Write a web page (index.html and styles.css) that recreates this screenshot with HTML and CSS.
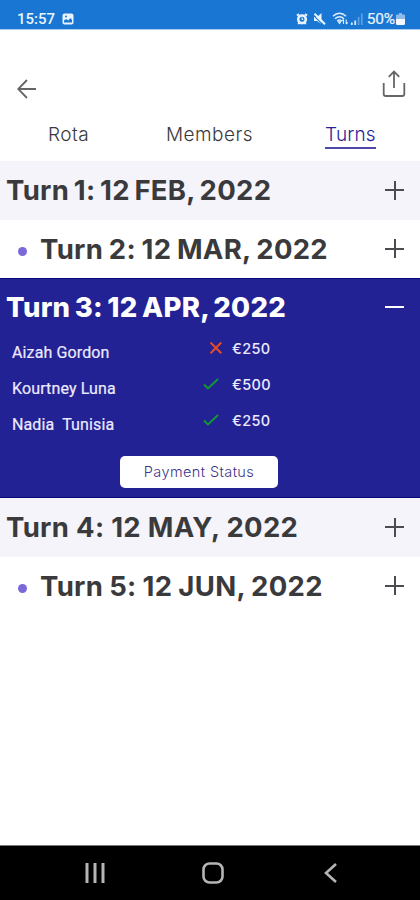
FILE: index.html
```html
<!DOCTYPE html>
<html lang="en">
<head>
    <meta charset="UTF-8">
    <meta name="viewport" content="width=device-width, initial-scale=1.0">
    <title>Turns</title>
    <link rel="stylesheet" href="styles.css">
</head>
<body>
    <div class="status-bar">
        <span class="clock">15:57</span>
        <svg class="photo-icon" width="12" height="12" viewBox="0 0 12 12">
            <rect x="0.5" y="0.5" width="11" height="11" rx="2" fill="#e9f3fc"/>
            <path d="M2 9.5V7.5L4.2 6l2 1.6L8.5 5 10 7v2.5z" fill="#1976d2"/>
            <circle cx="4" cy="3.6" r="1" fill="#1976d2"/>
        </svg>
        <div class="status-right">
            <svg class="alarm-icon" width="12" height="12" viewBox="0 0 12 12">
                <circle cx="6" cy="6.3" r="3.8" fill="none" stroke="#e9f3fc" stroke-width="2.6"/>
                <path d="M1 2.6L3 1M11 2.6L9 1M2.2 11l1.4-1.6M9.8 11L8.4 9.4" stroke="#e9f3fc" stroke-width="2"/>
                <path d="M6 4.5v2h1.3" fill="none" stroke="#e9f3fc"/>
            </svg>
            <svg class="mute-icon" width="13" height="12" viewBox="0 0 13 12">
                <path d="M1 4h3l4.5-4v11L4 8H1z" fill="#e9f3fc"/>
                <path d="M0.5 2.3l9.5 9.5" stroke="#1976d2" stroke-width="1.2"/>
                <path d="M1.5 0.8l10.5 10.5" stroke="#e9f3fc" stroke-width="2"/>
            </svg>
            <svg class="wifi-icon" width="17" height="13" viewBox="0 0 17 13">
                <path d="M1 4.3c4-4 9-4 13 0M3 6.8c3-2.7 6-2.7 9 0M5.2 9c1.6-1.4 3-1.4 4.6 0" fill="none" stroke="#e0eefb" stroke-width="1.5"/>
                <path d="M7.5 11.5L6.3 9.8h2.4zM11.5 12V7.5M10 9l1.5-1.7M14.2 7.5V12M15.8 10.3L14.2 12" fill="#e0eefb" stroke="#e0eefb" stroke-width="1.1"/>
            </svg>
            <svg class="signal-icon" width="13" height="12" viewBox="0 0 13 12">
                <path d="M1.8 12V9.5M5.2 12V7.5" stroke="#d5e7f9" stroke-width="1.8"/>
                <path d="M8.6 12V4M11.8 12V0.5" stroke="#5c9fe0" stroke-width="1.8"/>
            </svg>
            <span class="percent">50%</span>
            <svg class="battery-icon" width="9" height="12" viewBox="0 0 9 12">
                <path d="M3 0h3v1.5h2q1 0 1 1V6H0V2.5q0-1 1-1h2z" fill="#8dbcea"/>
                <path d="M0 6h9v4.5q0 1.5-1.5 1.5h-6Q0 12 0 10.5z" fill="#f2f8fe"/>
            </svg>
        </div>
    </div>

    <header class="top-bar">
        <svg class="back-icon" width="20" height="20" viewBox="0 0 20 20">
            <path d="M19 10H1.5M10 1L1.2 10l8.8 9" fill="none" stroke="#666" stroke-width="1.8"/>
        </svg>
        <svg class="share-icon" width="24" height="28" viewBox="0 0 24 28">
            <path d="M1.7 13v11q0 2 2 2h16.6q2 0 2-2V13M12 18V2M6.8 6.8L12 1.5l5.2 5.3" fill="none" stroke="#666" stroke-width="1.8"/>
        </svg>
    </header>

    <nav class="tabs">
        <a class="tab rota">Rota</a>
        <a class="tab members">Members</a>
        <a class="tab turns active">Turns</a>
    </nav>

    <main>
        <section class="turn shaded">
            <h2 class="feb">Turn 1: 12 FEB, 2022</h2>
            <span class="toggle plus"></span>
        </section>
        <section class="turn">
            <span class="dot"></span>
            <h2 class="mar">Turn 2: 12 MAR, 2022</h2>
            <span class="toggle plus"></span>
        </section>
        <section class="open-turn">
            <div class="turn">
                <h2 class="apr">Turn 3: 12 APR, 2022</h2>
                <span class="toggle"></span>
            </div>
            <ul class="payments">
                <li>
                    <span class="name">Aizah Gordon</span>
                    <svg class="cross" width="14" height="14" viewBox="0 0 14 14"><path d="M1.5 1.5l10.8 10.8M12.3 1.5L1.5 12.3" stroke="#e64a26" stroke-width="2"/></svg>
                    <span class="amount">€250</span>
                </li>
                <li>
                    <span class="name">Kourtney Luna</span>
                    <svg class="check" width="16" height="12" viewBox="0 0 16 12"><path d="M1 6.5l4 4L15 1" fill="none" stroke="#109a32" stroke-width="1.9"/></svg>
                    <span class="amount">€500</span>
                </li>
                <li>
                    <span class="name">Nadia&nbsp; Tunisia</span>
                    <svg class="check" width="16" height="12" viewBox="0 0 16 12"><path d="M1 6.5l4 4L15 1" fill="none" stroke="#109a32" stroke-width="1.9"/></svg>
                    <span class="amount">€250</span>
                </li>
            </ul>
            <button class="status-button">Payment Status</button>
        </section>
        <section class="turn shaded">
            <h2 class="may">Turn 4: 12 MAY, 2022</h2>
            <span class="toggle plus"></span>
        </section>
        <section class="turn">
            <span class="dot"></span>
            <h2 class="jun">Turn 5: 12 JUN, 2022</h2>
            <span class="toggle plus"></span>
        </section>
    </main>

    <footer class="phone-nav">
        <svg width="20" height="20" viewBox="0 0 20 20"><path d="M2 0v20M10 0v20M18 0v20" stroke="#b5b5b5" stroke-width="3"/></svg>
        <svg class="home-icon" width="22" height="22" viewBox="0 0 22 22"><rect x="1.5" y="1.5" width="19" height="19" rx="6" fill="none" stroke="#b5b5b5" stroke-width="2.6"/></svg>
        <svg width="13" height="20" viewBox="0 0 13 20"><path d="M12 1L2 10l10 9" fill="none" stroke="#b5b5b5" stroke-width="2.6"/></svg>
    </footer>
</body>
</html>
```
FILE: styles.css
```css
/* Reset some default styles */
body, h2, ul {
    margin: 0;
    padding: 0;
}

body {
    display: flex;
    flex-direction: column;
    height: 900px;
    overflow: hidden;
    background: #fff;
    color: #3a3a3d;
    font-family: Inter, 'Liberation Sans', sans-serif;
}

svg {
    display: block;
    flex: none;
}

/* Phone status bar */
.status-bar {
    display: flex;
    align-items: center;
    box-sizing: border-box;
    height: 30px;
    padding: 8px 15px 0 17px;
    background: #1976d2;
    border-bottom: 1px solid #a9cdf0;
    color: #e9f3fc;
    font-family: Roboto, sans-serif;
    font-size: 15px;
    font-weight: 500;
}

.clock {
    width: 38px;
}

.photo-icon {
    margin-left: 7px;
}

.status-right {
    display: flex;
    align-items: center;
    margin-left: auto;
}

.mute-icon {
    margin-left: 5px;
}

.wifi-icon {
    margin-left: 6px;
}

.signal-icon {
    margin-left: 1px;
}

.percent {
    margin-left: 4px;
    font-weight: 400;
    font-size: 15.5px;
    letter-spacing: -0.2px;
    -webkit-text-stroke: 0.2px;
}

.battery-icon {
    margin-left: 1px;
}

/* Back and share */
.top-bar {
    display: flex;
    justify-content: space-between;
    align-items: flex-start;
    box-sizing: border-box;
    height: 86px;
    padding: 40px 14px 0 17px;
}

.back-icon {
    margin-top: 9px;
}

/* Tabs */
.tabs {
    display: flex;
    align-items: flex-start;
    box-sizing: border-box;
    height: 45px;
    padding: 6px 0 0 48px;
}

.tab {
    height: 25px;
    font-size: 19px;
    font-weight: 300;
    line-height: 25px;
    letter-spacing: 0.45px;
    white-space: nowrap;
}

.rota {
    width: 118px;
}

.members {
    width: 159px;
}

.turns {
    width: 51px;
    letter-spacing: 0.2px;
}

.active {
    border-bottom: 2px solid #5048a8;
    color: #262296;
}

/* Turn rows */
.turn {
    display: flex;
    align-items: center;
    box-sizing: border-box;
    height: 58.5px;
    padding: 0 16px 0 6px;
}

.shaded {
    background: #f5f4fa;
}

.turn h2 {
    font-size: 27.5px;
    font-weight: 700;
    line-height: 36px;
    letter-spacing: 0.3px;
    white-space: nowrap;
}

.turn .feb {
    word-spacing: -2.2px;
}

.turn .mar {
    word-spacing: -1.2px;
}

.turn .apr {
    font-weight: 800;
    word-spacing: -2px;
}

.turn .jun {
    word-spacing: -0.8px;
}

.dot {
    width: 9px;
    height: 9px;
    margin: 5px 13px 0 12px;
    border-radius: 50%;
    background: #7c68d8;
}

.toggle {
    display: flex;
    align-items: center;
    justify-content: center;
    width: 19px;
    height: 19px;
    margin-left: auto;
    color: #4c4c50;
}

.open-turn .toggle {
    color: #fff;
}

.toggle::before {
    content: '';
    width: 19px;
    height: 2px;
    background: currentColor;
}

.plus::after {
    content: '';
    width: 2px;
    height: 19px;
    margin-left: -10.5px;
    margin-right: 8.5px;
    background: currentColor;
}

/* Expanded turn */
.open-turn {
    box-sizing: border-box;
    height: 220px;
    background: #232294;
    border-top: 1px solid #090878;
    border-bottom: 1px solid #090878;
    color: #fff;
}

.open-turn .turn {
    height: 56px;
}

.payments {
    margin-top: -5px;
    list-style: none;
}

.payments li {
    display: flex;
    align-items: center;
    height: 36px;
    padding-left: 12px;
    color: #eceaff;
}

.name {
    width: 191px;
    padding-top: 9px;
    font-family: Roboto, sans-serif;
    font-size: 16px;
    letter-spacing: 0.12px;
    -webkit-text-stroke: 0.2px;
    white-space: nowrap;
}

.cross {
    margin: 0 9px 0 6px;
}

.check {
    margin-right: 13px;
}

.amount {
    font-size: 14.5px;
    font-weight: 500;
    letter-spacing: 0.4px;
}

.status-button {
    display: block;
    width: 158px;
    height: 32px;
    margin: 18px 0 0 120px;
    padding: 0 0 2px;
    border: 0;
    border-radius: 5px;
    background: #fff;
    color: #3d3589;
    font-family: Inter, sans-serif;
    font-size: 14.5px;
    font-weight: 300;
    letter-spacing: 0.4px;
}

/* Phone navigation */
.phone-nav {
    display: flex;
    align-items: center;
    box-sizing: border-box;
    height: 55px;
    margin-top: auto;
    padding: 0 83px 0 85px;
    justify-content: space-between;
    background: #000;
    border-top: 1px solid #777;
}

.home-icon {
    margin-right: 4px;
}
```
